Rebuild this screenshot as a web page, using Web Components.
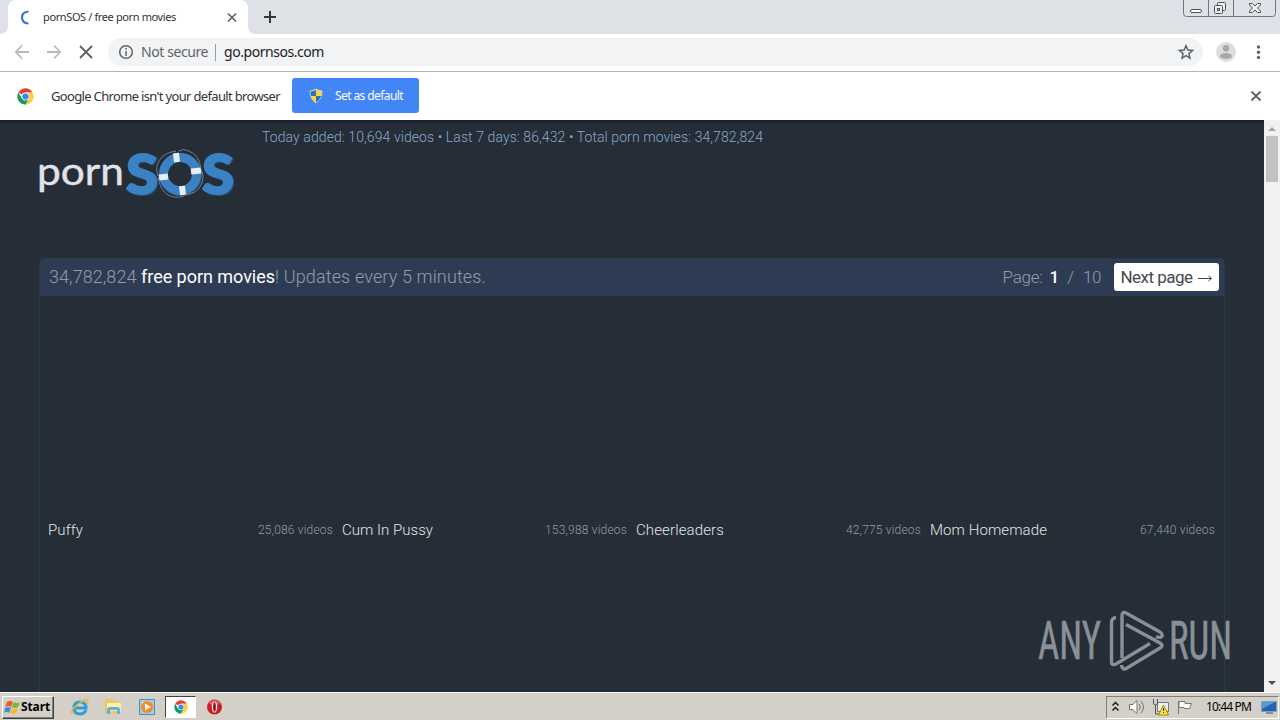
<!DOCTYPE html>
<html lang="en">
<head>
<meta charset="utf-8">
<title>pornSOS / free porn movies</title>
<style>
    html, body {
        margin: 0;
        height: 100%;
        overflow: hidden;
    }
    body {
        font-family: "Noto Sans", "Open Sans", sans-serif;
        font-size: 12px;
    }
</style>
</head>
<body>
<desktop-screen></desktop-screen>

<script>
function define(name, html, setup) {
    const template = document.createElement('template');
    template.innerHTML = html;
    customElements.define(name, class extends HTMLElement {
        constructor() {
            super();
            this.attachShadow({ mode: 'open' });
            this.shadowRoot.appendChild(template.content.cloneNode(true));
        }
        connectedCallback() {
            if (setup) setup(this, this.shadowRoot);
        }
    });
}

// One line of text, tracked so that it fills the given width
define('text-run', `
    <style>
        :host { display: block; flex: none; }
        span { display: inline-block; vertical-align: top; white-space: pre; }
    </style>
    <span><slot></slot></span>
`, (host, root) => {
    const width = Number(host.getAttribute('width'));
    const span = root.querySelector('span');
    const natural = span.getBoundingClientRect().width;
    if (!width || !natural) return;
    span.style.letterSpacing = (width - natural) / host.textContent.length + 'px';
    host.style.width = width + 'px';
});

define('chrome-logo', `
    <style>
        :host { display: block; width: 17px; height: 17px; flex: none; }
        svg { display: block; width: 100%; height: 100%; }
    </style>
    <svg viewBox="0 0 48 48">
        <circle cx="24" cy="24" r="23" fill="#fff"/>
        <path d="M24 24 4.1 12.5A23 23 0 0 1 43.9 12.5H24Z" fill="#db4437"/>
        <path d="M4.1 12.5A23 23 0 0 0 24 47l10-17.300L24 24l-10 5.700Z" fill="#0f9d58"/>
        <path d="M43.900 12.500A23 23 0 0 1 24 47l10-17.300L33 18l-9-5.500Z" fill="#ffcd40"/>
        <circle cx="24" cy="24" r="11" fill="#f1f1f1"/>
        <circle cx="24" cy="24" r="8.800" fill="#4285f4"/>
    </svg>
`);

define('window-buttons', `
    <style>
        :host { display: block; margin-left: auto; margin-right: 4px; }
        svg { display: block; }
    </style>
    <svg width="93" height="17" fill="none" stroke="#6e7582">
        <path d="M.5-1V13.500q0 3 3 3h86q3 0 3-3V-1M25.500 0v16M50.500 0v16"/>
        <rect x="7.500" y="9.500" width="11" height="3" rx="1.500" fill="#fff" stroke="#4b505b"/>
        <g stroke="#4b505b" fill="#eee">
            <rect x="34.500" y="2.500" width="8" height="8" rx="1"/>
            <rect x="31.500" y="5.500" width="8" height="8" rx="1"/>
            <rect x="34.500" y="8.500" width="2" height="2"/>
            <path d="M66.500 3.500h3l2.500 2.500 2.500-2.500h3v1.500l-3 3 3 3v1.500h-3l-2.500-2.500-2.500 2.500h-3V11l3-3-3-3Z"/>
        </g>
    </svg>
`);

define('browser-tabs', `
    <style>
        :host { display: flex; height: 34px; background: #dee1e6; }
        .before, .after { align-self: flex-end; flex: none; }
        .tab {
            display: flex;
            align-items: center;
            box-sizing: border-box;
            width: 240px;
            padding: 0 9px 1px 10px;
            border-radius: 8px 8px 0 0;
            background: #fff;
            color: #333;
            font-size: 11px;
        }
        .spinner { margin-right: 9px; }
        .close { margin-left: auto; }
        .plus { margin: 10px 0 0 7px; }
    </style>
    <svg class="before" width="8" height="8"><path d="M8 0v8H0Q8 8 8 0" fill="#fff"/></svg>
    <div class="tab">
        <svg class="spinner" width="16" height="16" fill="none" stroke="#3e72d8" stroke-width="2.200"><path d="M10.500 2.500Q4 3 4 8.500T10.500 14.500"/></svg>
        <text-run width="133">pornSOS / free porn movies</text-run>
        <svg class="close" width="14" height="14" stroke="#5f6368" stroke-width="1.700"><path d="m3 3.500 8 8m0-8-8 8"/></svg>
    </div>
    <svg class="after" width="8" height="8"><path d="M0 0v8h8Q0 8 0 0" fill="#fff"/></svg>
    <svg class="plus" width="14" height="14" stroke="#33363b" stroke-width="2"><path d="M7 1v12M1 7h12"/></svg>
    <window-buttons></window-buttons>
`);

define('address-bar', `
    <style>
        :host {
            display: flex;
            align-items: center;
            box-sizing: border-box;
            height: 38px;
            padding: 0 10px 0 11px;
            border-bottom: 1px solid #b3b6b7;
            background: #fff;
        }
        svg { flex: none; }
        .nav { display: flex; gap: 10px; }
        .field {
            display: flex;
            flex: 1;
            align-items: center;
            box-sizing: border-box;
            height: 28px;
            margin: 0 12px 1px 11px;
            padding: 0 9px 0 10px;
            border-radius: 14px;
            background: #f1f3f4;
            color: #5f6368;
            font-size: 14px;
        }
        .field text-run { margin-bottom: 2px; }
        .info { margin-right: 7px; }
        .rule { width: 1px; height: 17px; margin: 0 8px 0 7px; background: #999da1; }
        .url { color: #202124; }
        .star { margin-left: auto; }
        .nav, .user, .menu { margin-bottom: 1px; }
        .menu { margin-left: 13px; }
    </style>
    <div class="nav">
        <svg width="22" height="22" fill="none" stroke="#b7b9bc" stroke-width="1.800"><path d="M18 11H5m6-6.500L4.800 11l6.200 6.500"/></svg>
        <svg width="22" height="22" fill="none" stroke="#b7b9bc" stroke-width="1.800"><path d="M4 11h13m-6-6.500 6.200 6.500-6.200 6.500"/></svg>
        <svg width="22" height="22" fill="none" stroke="#5f6368" stroke-width="1.900"><path d="m5 5 12 12m0-12L5 17"/></svg>
    </div>
    <div class="field">
        <svg class="info" width="16" height="16" fill="none" stroke="#5f6368" stroke-width="1.500"><circle cx="8" cy="8" r="6.300"/><path d="M8 7v5M8 4v1.700"/></svg>
        <text-run width="67">Not secure</text-run>
        <span class="rule"></span>
        <text-run class="url" width="100">go.pornsos.com</text-run>
        <svg class="star" width="16" height="16" fill="none" stroke="#5f6368" stroke-width="1.500"><path d="m8 1.700 1.800 4.400 4.700.4-3.600 3.100 1.100 4.600-4-2.500-4 2.500 1.100-4.600-3.600-3.100 4.700-.4Z"/></svg>
    </div>
    <svg class="user" width="22" height="22"><circle cx="11" cy="11" r="10" fill="#dedede"/><circle cx="11" cy="7.300" r="3.200" fill="#a8a8a8"/><ellipse cx="11" cy="15" rx="6" ry="3" fill="#a8a8a8"/></svg>
    <svg class="menu" width="20" height="20" fill="#5f6368"><circle cx="8.500" cy="5" r="1.700"/><circle cx="8.500" cy="10.200" r="1.700"/><circle cx="8.500" cy="15.400" r="1.700"/></svg>
`);

define('default-browser-bar', `
    <style>
        :host {
            display: flex;
            align-items: center;
            box-sizing: border-box;
            height: 48px;
            padding: 0 17px;
            background: #fff;
            color: #333;
            font-size: 13px;
        }
        .message { margin: 0 12px 1px 17px; }
        .button {
            display: flex;
            align-items: center;
            box-sizing: border-box;
            width: 127px;
            height: 35px;
            margin-bottom: 1px;
            padding-left: 16px;
            border-radius: 3px;
            background: #4285f4;
            color: #fff;
            font-size: 12px;
        }
        .shield { margin-right: 11px; }
        .close { margin-left: auto; }
    </style>
    <chrome-logo></chrome-logo>
    <text-run class="message" width="229">Google Chrome isn't your default browser</text-run>
    <div class="button">
        <svg class="shield" width="16" height="16">
            <path d="M8 1Q11 3 14 3 14 11 8 15 2 11 2 3 5 3 8 1Z" fill="#ffd33d" stroke="#ddd2aa"/>
            <path d="M8 2v6H3Q2.500 6 2.500 3.500 6 3 8 2ZM8 8h5.200Q12 12 8 14.500Z" fill="#2672bd"/>
        </svg>
        <text-run width="68">Set as default</text-run>
    </div>
    <svg class="close" width="14" height="14" stroke="#5f6368" stroke-width="1.800"><path d="m2.500 2.500 9 9m0-9-9 9"/></svg>
`);

define('site-logo', `
    <style>
        :host { display: block; width: 200px; height: 56px; }
        svg { display: block; overflow: visible; }
        .word { font: 39px Lato, sans-serif; fill: #e2e3ea; stroke: #e2e3ea; stroke-width: .4; }
        .sos { font: 900 56px Lato, sans-serif; fill: #3b82c4; stroke: #3b82c4; stroke-width: 2; }
        .shade { fill: #255681; stroke: #255681; }
    </style>
    <svg width="200" height="56">
        <text class="word" x="-2" y="39" textLength="87" lengthAdjust="spacingAndGlyphs">porn</text>
        <text class="sos shade" x="88" y="49" textLength="32" lengthAdjust="spacingAndGlyphs">S</text>
        <text class="sos" x="87" y="48" textLength="32" lengthAdjust="spacingAndGlyphs">S</text>
        <text class="sos shade" x="164" y="49" textLength="32" lengthAdjust="spacingAndGlyphs">S</text>
        <text class="sos" x="163" y="48" textLength="32" lengthAdjust="spacingAndGlyphs">S</text>
        <g fill="none">
            <circle cx="141.500" cy="28.500" r="17" stroke="#285f91" stroke-width="9"/>
            <circle cx="141" cy="28" r="16.500" stroke="#3b82c4" stroke-width="9"/>
            <g stroke="#e8edf1" stroke-width="6">
                <path d="m137 7 1 9M143 40l1 9M120 31.500l9-1M152 25.500l10-1"/>
            </g>
            <path d="M137 5Q124 7 120 15 116 22 119 30M119 31Q121 44 129 49 136 53 145 50M145 49Q158 48 162 39 166 31 162 23M162 22Q160 9 150 5 144 2 140 5" stroke="#8d9297" stroke-width=".8"/>
        </g>
    </svg>
`);

define('category-card', `
    <style>
        :host {
            display: flex;
            align-items: center;
            justify-content: space-between;
            height: 24px;
            color: #e2e5e8;
            font-size: 15px;
        }
        .count { color: #929da6; font-size: 12px; }
    </style>
    <slot></slot>
    <span class="count"><slot name="count"></slot></span>
`);

define('movie-panel', `
    <style>
        :host {
            display: block;
            box-sizing: border-box;
            width: 1186px;
            height: 434px;
            margin-left: 39px;
            border: 1px solid #263b43;
            border-bottom: 0;
            border-radius: 5px 5px 0 0;
        }
        header {
            display: flex;
            align-items: center;
            box-sizing: border-box;
            height: 37px;
            padding: 0 5px 2px 9px;
            border-radius: 4px 4px 0 0;
            background: #2e3c53;
            color: #969ca5;
            font-size: 18px;
        }
        .white { color: #fff; font-weight: 400; }
        .pager { display: flex; align-items: center; margin-left: auto; font-size: 17px; }
        .current { margin: 0 8px 0 7px; color: #fff; font-weight: 500; }
        .total { margin: 0 13px 0 9px; }
        .next {
            display: flex;
            align-items: center;
            justify-content: center;
            width: 105px;
            height: 28px;
            border-radius: 3px;
            background: #fff;
            color: #444850;
            font-weight: 400;
        }
        .next svg { margin-left: 5px; }
        .grid {
            display: grid;
            grid-template-columns: repeat(4, 285px);
            gap: 9px;
            padding: 222px 8px 0;
        }
    </style>
    <header>
        <text-run width="92">34,782,824 </text-run>
        <text-run class="white" width="134">free porn movies</text-run>
        <text-run width="211">! Updates every 5 minutes.</text-run>
        <div class="pager">
            <text-run width="40">Page:</text-run>
            <span class="current">1</span>
            <span>/</span>
            <text-run class="total" width="18">10</text-run>
            <div class="next">
                <text-run width="72">Next page</text-run>
                <svg width="15" height="10" fill="none" stroke="#444850"><path d="M0 6.500h13M10.500 4l3 2.500-3 2.500"/></svg>
            </div>
        </div>
    </header>
    <div class="grid">
        <category-card><text-run width="35">Puffy</text-run><text-run slot="count" width="75">25,086 videos</text-run></category-card>
        <category-card><text-run width="91">Cum In Pussy</text-run><text-run slot="count" width="82">153,988 videos</text-run></category-card>
        <category-card><text-run width="88">Cheerleaders</text-run><text-run slot="count" width="75">42,775 videos</text-run></category-card>
        <category-card><text-run width="117">Mom Homemade</text-run><text-run slot="count" width="75">67,440 videos</text-run></category-card>
    </div>
`);

define('scroll-bar', `
    <style>
        :host { display: flex; flex-direction: column; width: 16px; background: #f1f1f1; }
        .thumb { width: 12px; height: 46px; margin: 0 2px; background: #c1c1c1; }
        .down { margin-top: auto; }
        svg { display: block; }
    </style>
    <svg width="16" height="16"><path d="M4 11h8L8 7Z" fill="#a3a3a3"/></svg>
    <div class="thumb"></div>
    <svg class="down" width="16" height="17"><path d="M4 6h8l-4 4Z" fill="#505050"/></svg>
`);

define('any-run-mark', `
    <style>
        :host { position: absolute; left: 1038px; top: 608px; width: 194px; height: 64px; opacity: .62; }
        svg { display: block; overflow: visible; }
        text { font: 54px "Roboto Condensed", Roboto, sans-serif; fill: #c9cdd1; stroke: #c9cdd1; stroke-width: .5; }
    </style>
    <svg width="194" height="64" fill="none" stroke="#c9cdd1" stroke-width="3.400">
        <text transform="translate(0 51)" textLength="63" lengthAdjust="spacingAndGlyphs">ANY</text>
        <text transform="translate(131 51)" textLength="63" lengthAdjust="spacingAndGlyphs">RUN</text>
        <path d="M78 9.500Q73.500 10 73.500 15V54Q73.500 58 78 56L112 35.500"/>
        <path d="M84 50V8Q84 3 88 5L122 24Q126 27 123 29 121 30 118 28.500"/>
        <path d="M88 16.500 122 35Q126 37.500 122 40L89 60Q84 63 83.500 57"/>
    </svg>
`);

define('site-page', `
    <style>
        :host {
            display: flex;
            height: 572px;
            background: #252d37;
            color: #9bb8d0;
            font-family: Roboto, sans-serif;
            font-weight: 300;
        }
        main { width: 1264px; background: linear-gradient(#18222c, #252d37 5px); }
        .top { display: flex; height: 138px; }
        site-logo { margin: 26px 0 0 39px; }
        .stats { margin: 9px 0 0 23px; color: #87aacb; font-size: 14px; }
    </style>
    <main>
        <div class="top">
            <site-logo></site-logo>
            <text-run class="stats" width="501">Today added: 10,694 videos • Last 7 days: 86,432 • Total porn movies: 34,782,824</text-run>
        </div>
        <movie-panel></movie-panel>
    </main>
    <scroll-bar></scroll-bar>
`);

define('task-bar', `
    <style>
        :host {
            display: flex;
            align-items: center;
            box-sizing: border-box;
            height: 28px;
            padding: 1px 1px 0 2px;
            border-top: 1px solid #fff;
            background: #d4d0c8;
            color: #000;
            font-size: 12px;
        }
        .start {
            display: flex;
            align-items: center;
            box-sizing: border-box;
            width: 52px;
            height: 23px;
            padding-left: 1px;
            border: 1px solid;
            border-color: #fff #404040 #404040 #fff;
            box-shadow: inset -1px -1px #808080;
            font-weight: 700;
        }
        .start svg { flex: none; }
        .start text-run, .time { margin-bottom: 1px; }
        .apps { display: flex; align-items: center; margin-left: 16px; gap: 13px; }
        .active {
            display: flex;
            align-items: center;
            justify-content: center;
            box-sizing: border-box;
            width: 31px;
            height: 22px;
            margin: 0 -4px 0 -4px;
            border: 1px solid;
            border-color: #404040 #fff #fff #404040;
            background: #fff;
        }
        .active chrome-logo { width: 14px; height: 14px; }
        .tray {
            display: flex;
            align-items: center;
            box-sizing: border-box;
            width: 173px;
            height: 23px;
            margin-left: auto;
            padding: 0 1px 0 4px;
            border: 1px solid;
            border-color: #808080 #fff #fff #808080;
        }
        .tray svg { flex: none; }
        .speaker { margin-left: 8px; }
        .network, .flag { margin-left: 6px; }
        .time { margin-left: 12px; }
        .screen { margin-left: auto; }
    </style>
    <div class="start">
        <svg width="17" height="18"><path d="M3 4Q6 2 9 4L7 9Q5 7 1 9Z" fill="#e95b26"/><path d="M10 4q3 2 6 0l-2 5q-3 2-6 0Z" fill="#78b83b"/><path d="M1 10q3-2 6 0l-2 5q-3-2-5 0Z" fill="#3b91d2"/><path d="M8 10q3 2 6 0l-2 5q-3 2-6 0Z" fill="#f2bf29"/></svg>
        <text-run width="29">Start</text-run>
    </div>
    <div class="apps">
        <svg width="20" height="20" fill="none"><path d="M16 13Q14 17 10 17 4 17 4 11 4 5 10 5 16 5 16 11H5" stroke="#2d9ed8" stroke-width="3"/><path d="M3 17Q-1 15 7 8 17 0 18 4q0 2-2 3" stroke="#e9b73c" stroke-width="1.500"/></svg>
        <svg width="20" height="20"><path d="M2 4q0-2 2-2h5l2 2h5v12H2Z" fill="#e9c761"/><path d="M4 6h14v8H4Z" fill="#fff0a5"/><path d="M4 17v-4q0-3 3-3h7q3 0 3 3v4h-3v-4H7v4Z" fill="#5eb2dc"/></svg>
        <svg width="20" height="20"><path d="M3.500 2.500h15v15h-15Z" fill="#9bcdf1" stroke="#4d8cc5"/><path d="M6 5h9v9H6Z" fill="#fff"/><circle cx="11" cy="10" r="6" fill="#f58b1b"/><path d="m9 6.500 6 3.500-6 3.500Z" fill="#fff"/></svg>
        <div class="active"><chrome-logo></chrome-logo></div>
        <svg width="18" height="18"><circle cx="9.500" cy="9" r="7.500" fill="#c91c25"/><path d="M3.500 5q6-6 12 0-6 5-12 0Z" fill="#e65a57"/><ellipse cx="9.500" cy="9" rx="2.700" ry="5.500" fill="#fff"/><ellipse cx="9.500" cy="9" rx="1.400" ry="4.800" fill="#991018"/></svg>
    </div>
    <div class="tray">
        <svg width="9" height="15" fill="none" stroke="#111" stroke-width="1.400"><path d="m1.500 5.500 3-3 3 3m-6 5 3-3 3 3"/></svg>
        <svg class="speaker" width="18" height="18" fill="#fff" stroke="#70757a"><path d="M1.500 6.500H5l4-4v13l-4-4H1.500Z"/><path d="M11 6q3 3 0 6m2-9q5 6 0 12" fill="none"/></svg>
        <svg class="network" width="18" height="18"><path d="M5.500 4.500h11v9h-11Z" fill="#edf0f0" stroke="#777"/><path d="M1.500 1v4q0 2 2 2t2-2V1M3.500 7v9h4" fill="none" stroke="#555"/><path d="m11.500 7 5 10h-10Z" fill="#ffe436" stroke="#a68a00"/><path d="M11.500 10v3m0 1v1" stroke="#222"/></svg>
        <svg class="flag" width="18" height="18" fill="#fff" stroke="#777"><path d="M2.500 3v13"/><path d="M3 3.500h6v2h6.500l-2 5H8v-1H3Z"/></svg>
        <text-run class="time" width="45">10:44 PM</text-run>
        <svg class="screen" width="16" height="16"><path d="M.5 2.500h15v10H.5Z" fill="#2263ab" stroke="#72a3ca"/><path d="M1 3h13L1 10Z" fill="#5d99d1"/><path d="M5 14h7" stroke="#31516d"/></svg>
    </div>
`);

define('desktop-screen', `
    <style>
        :host { display: block; position: relative; width: 1280px; height: 720px; overflow: hidden; }
    </style>
    <browser-tabs></browser-tabs>
    <address-bar></address-bar>
    <default-browser-bar></default-browser-bar>
    <site-page></site-page>
    <task-bar></task-bar>
    <any-run-mark></any-run-mark>
`);
</script>
</body>
</html>
